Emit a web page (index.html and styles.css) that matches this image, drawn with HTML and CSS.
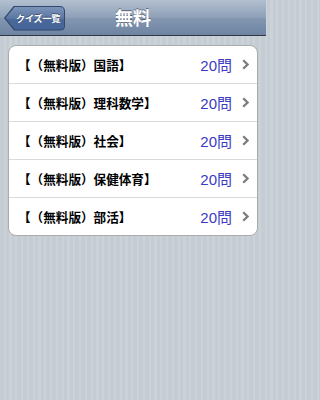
FILE: index.html
```html
<!DOCTYPE html>
<html lang="ja">
<head>
<meta charset="utf-8">
<link rel="stylesheet" href="styles.css">
</head>
<body>
<div class="navbar">
  <div class="nav-left">
    <span class="back"><span class="back-inner">クイズ一覧</span></span>
  </div>
  <div class="title">無料</div>
  <div class="nav-right"></div>
</div>
<div class="content">
  <div class="card">
    <div class="row"><span class="label">【（無料版）国語】</span><span class="value">20問</span><svg class="chev" viewBox="0 0 7 11" width="7" height="11"><polyline points="1.2,1.2 5.5,5.5 1.2,9.8" fill="none" stroke="#7d7d7d" stroke-width="2.3"/></svg></div>
    <div class="row"><span class="label">【（無料版）理科数学】</span><span class="value">20問</span><svg class="chev" viewBox="0 0 7 11" width="7" height="11"><polyline points="1.2,1.2 5.5,5.5 1.2,9.8" fill="none" stroke="#7d7d7d" stroke-width="2.3"/></svg></div>
    <div class="row"><span class="label">【（無料版）社会】</span><span class="value">20問</span><svg class="chev" viewBox="0 0 7 11" width="7" height="11"><polyline points="1.2,1.2 5.5,5.5 1.2,9.8" fill="none" stroke="#7d7d7d" stroke-width="2.3"/></svg></div>
    <div class="row"><span class="label">【（無料版）保健体育】</span><span class="value">20問</span><svg class="chev" viewBox="0 0 7 11" width="7" height="11"><polyline points="1.2,1.2 5.5,5.5 1.2,9.8" fill="none" stroke="#7d7d7d" stroke-width="2.3"/></svg></div>
    <div class="row"><span class="label">【（無料版）部活】</span><span class="value">20問</span><svg class="chev" viewBox="0 0 7 11" width="7" height="11"><polyline points="1.2,1.2 5.5,5.5 1.2,9.8" fill="none" stroke="#7d7d7d" stroke-width="2.3"/></svg></div>
  </div>
</div>
</body>
</html>
```
FILE: styles.css
```css
html, body {
  margin: 0;
  padding: 0;
}
body {
  width: 266px;
  height: 400px;
  overflow: hidden;
  font-family: "Liberation Sans", "Noto Sans CJK JP", sans-serif;
  text-spacing-trim: space-all;
  background: repeating-linear-gradient(90deg, #c5ccd4 0px, #c5ccd4 3.5px, #cbd2d8 3.5px, #cbd2d8 5.8px);
}
.navbar {
  height: 35px;
  border-bottom: 1px solid #2d3642;
  background: linear-gradient(#b3c0d0 0%, #8ea0b8 50%, #8397b1 51%, #6e84a2 100%);
  display: grid;
  grid-template-columns: 1fr auto 1fr;
  align-items: center;
}
.nav-left {
  padding-left: 4px;
  display: flex;
  align-items: center;
}
.back {
  display: block;
  width: 61px;
  height: 25px;
  background: #33496b;
  clip-path: polygon(10px 0, 100% 0, 100% 100%, 10px 100%, 0 50%);
  border-radius: 0 5px 5px 0;
  margin-top: 1px;
}
.back-inner {
  display: flex;
  align-items: center;
  justify-content: center;
  box-sizing: border-box;
  margin: 1px 1px 1px 1.5px;
  height: 23px;
  padding-left: 8px;
  padding-right: 1px;
  background: linear-gradient(#7b93b8 0%, #5a76a3 50%, #4a6898 51%, #45649a 100%);
  clip-path: polygon(9.5px 0, 100% 0, 100% 100%, 9.5px 100%, 0 50%);
  border-radius: 0 4px 4px 0;
  color: #fff;
  font-size: 9px;
  font-weight: bold;
  white-space: nowrap;
  text-shadow: 0 -1px 0 rgba(0,0,0,0.4);
}
.title {
  color: #fff;
  font-size: 18px;
  font-weight: bold;
  text-shadow: 0 -1px 0 rgba(0,0,0,0.45);
  margin-top: -1px;
}
.content {
  padding: 9px 8px 0 8px;
}
.card {
  background: #fff;
  border: 1px solid #a9abad;
  border-radius: 8px;
  overflow: hidden;
}
.row {
  height: 37px;
  display: flex;
  align-items: center;
  padding: 0 8px 0 9px;
  border-top: 1px solid #dadada;
}
.row:first-child {
  border-top: none;
}
.label {
  flex: 1;
  font-size: 12.6px;
  font-weight: bold;
  color: #000;
  white-space: nowrap;
}
.value {
  font-size: 15px;
  color: #3a3ac4;
  margin-right: 10px;
}
.chev {
  display: block;
  flex: none;
}
```
